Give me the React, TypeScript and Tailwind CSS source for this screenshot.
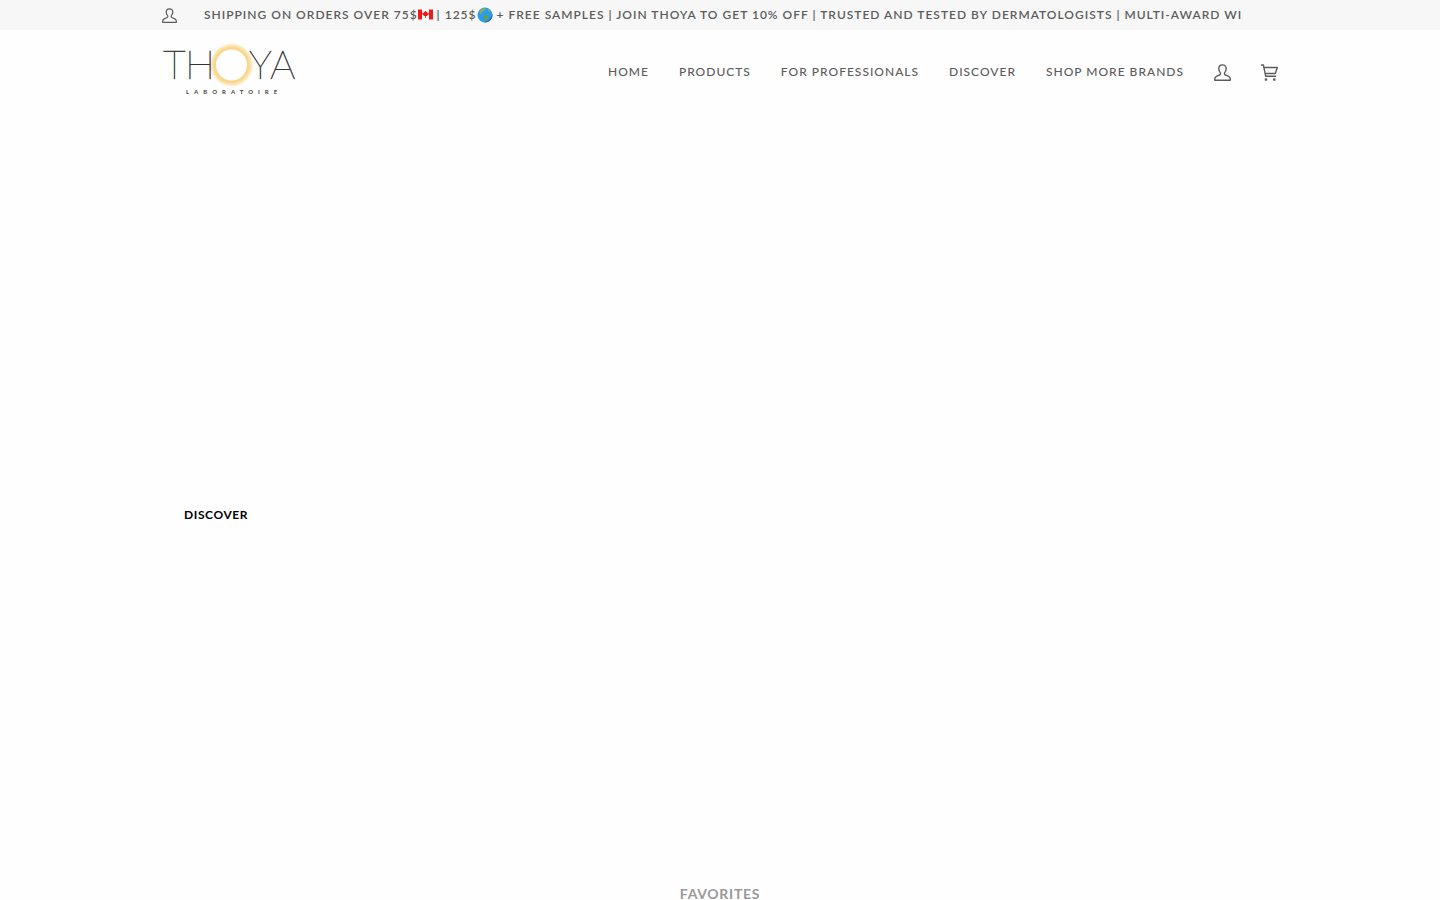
const navLinks = ['Home', 'Products', 'For Professionals', 'Discover', 'Shop More Brands'];

function UserIcon({ className }: { className: string }) {
    return (
        <svg viewBox="0 0 18 18" className={className} fill="none" stroke="currentColor" strokeWidth="1.5" strokeLinejoin="round" aria-hidden="true">
            <path d="M9 .9C6.600.9 5.100 2.500 5.100 4.800c0 2 .7 3.600 1.800 4.700.3.900.1 1.500-.6 1.900L2.600 13C1.300 13.600.8 14.500.8 16v1.200h16.400V16c0-1.500-.5-2.400-1.800-3l-3.700-1.600c-.7-.4-.9-1-.6-1.900 1.100-1.100 1.800-2.700 1.800-4.700C12.900 2.500 11.400.9 9 .9Z" />
        </svg>
    );
}

function CartIcon({ className }: { className: string }) {
    return (
        <svg viewBox="0 0 18 18" className={className} fill="none" stroke="currentColor" strokeWidth="1.5" strokeLinejoin="round" aria-hidden="true">
            <path d="M0 1h2.500L5 13h11M3.100 3.700h14.200l-2.200 6.300H4.400" />
            <rect x="4" y="15.200" width="2.500" height="2.500" fill="currentColor" stroke="none" />
            <rect x="12.800" y="15.200" width="2.500" height="2.500" fill="currentColor" stroke="none" />
        </svg>
    );
}

function FlagIcon() {
    return (
        <svg viewBox="0 0 15 11" className="inline-block w-[15px] h-[11px] align-[-1px]" role="img" aria-label="Canada">
            <rect width="15" height="11" rx="1" fill="#fff" />
            <path d="M0 .5h4v10H0zM11 .5h4v10h-4z" fill="#f01818" />
            <path d="M7.500 1.500l.9 1.600.9-.5-.2 2 1.300-1 .600 1.400-2.100 2H7.900v1.900h-.8V7H6.100L4 5l.600-1.400 1.300 1-.2-2 .9.500z" fill="#f01818" />
        </svg>
    );
}

function GlobeIcon() {
    return (
        <svg viewBox="0 0 16 16" className="inline-block w-4 h-4 align-[-4px]" role="img" aria-label="Worldwide">
            <circle cx="8" cy="8" r="7.500" fill="#2e9bea" />
            <path d="M15.400 6.800A7.500 7.500 0 0 1 7 15.400c4.500-1.200 7.300-4.200 8.400-8.600z" fill="#1c66b8" />
            <path d="M2.500 4C4 2 5.500 1 7.500.8l1.300 1.100-.8 1.400-1.900.6-.3 1.500-1.700.8.600 1.200-1.500-.3z" fill="#7fae62" />
            <path d="M7.300 8.300l2.700.3 1.700 1.600-1.200 2.100-1.700 2-.9-2.500-1.200-1.600z" fill="#5fa63c" />
            <path d="M11.500 2l2.300 2.200-1.300.6-1.400-1.400z" fill="#86ba48" />
        </svg>
    );
}

function Logo() {
    return (
        <svg viewBox="0 0 136 68" className="w-[136px] h-[68px]" role="img" aria-label="Thoya Laboratoire">
            <defs>
                <radialGradient id="sun">
                    <stop offset="68%" stopColor="#fff" />
                    <stop offset="73%" stopColor="#f8d488" />
                    <stop offset="82%" stopColor="#fbdb98" />
                    <stop offset="91%" stopColor="#fdebc0" />
                    <stop offset="100%" stopColor="#fefefe" />
                </radialGradient>
            </defs>
            <circle cx="69.500" cy="27" r="22" fill="url(#sun)" />
            <g className="font-['Lato',sans-serif] font-thin" fontSize="40" fill="#333" stroke="#333" strokeWidth="0.500">
                <text x="1" y="41">T</text>
                <text x="23" y="41">H</text>
                <text x="87" y="41">Y</text>
                <text x="108" y="41">A</text>
            </g>
            <text x="24" y="56" className="font-['Lato',sans-serif] font-bold" fontSize="6" letterSpacing="5" fill="#444">LABORATOIRE</text>
        </svg>
    );
}

export default function App() {
    return (
        <div className="min-h-screen bg-[#fefefe] font-['Lato',sans-serif] text-[#5c5c5c]">
            {/* Announcement bar */}
            <div className="bg-[#f7f7f7]">
                <div className="max-w-[1180px] mx-auto px-8 h-[30px] flex items-center">
                    <a href="#account" aria-label="My account">
                        <UserIcon className="w-[15px] h-[15px]" />
                    </a>
                    <p className="ml-[27px] mr-9 flex-1 min-w-0 overflow-hidden whitespace-nowrap text-xs leading-5 font-semibold tracking-[1px] uppercase">
                        Shipping on orders over 75$<FlagIcon /> | 125$<GlobeIcon /> + Free samples | Join Thoya to get 10% off | Trusted and tested by dermatologists | Multi-award winning
                    </p>
                </div>
            </div>

            {/* Header */}
            <header className="max-w-[1180px] mx-auto px-8 h-[84px] flex items-center justify-between">
                <a href="#home">
                    <Logo />
                </a>
                <nav className="flex items-center gap-[30px] text-xs leading-5 font-medium tracking-[1px] uppercase">
                    {navLinks.map((link) => (
                        <a key={link} href="#nav">{link}</a>
                    ))}
                    <a href="#account" aria-label="My account">
                        <UserIcon className="w-[17px] h-[17px]" />
                    </a>
                    <a href="#cart" aria-label="Cart">
                        <CartIcon className="w-[17px] h-[17px]" />
                    </a>
                </nav>
            </header>

            {/* Hero */}
            <section className="max-w-[1180px] mx-auto px-8 pt-[381px] pb-[349px]">
                <button className="block px-[22px] py-3 text-xs leading-4 font-bold tracking-wider uppercase text-black">
                    Discover
                </button>
            </section>

            {/* Favorites */}
            <section className="text-center">
                <h2 className="text-sm leading-5 font-bold tracking-wider uppercase text-[#999]">Favorites</h2>
            </section>
        </div>
    );
}
